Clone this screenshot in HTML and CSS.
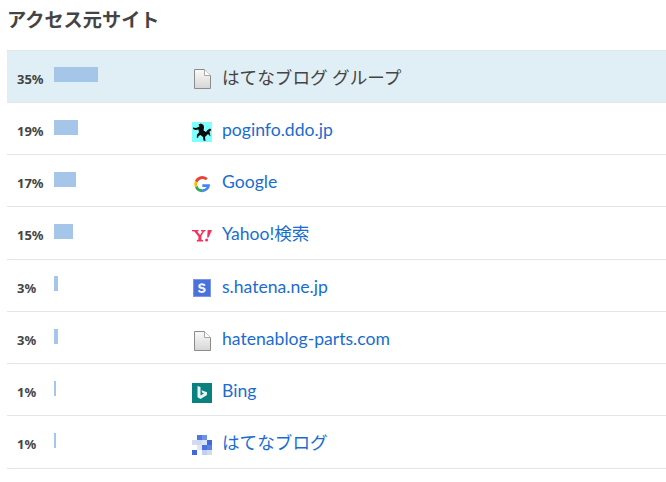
FILE: index.html
```html
<!DOCTYPE html>
<html lang="ja">
<head>
<meta charset="utf-8">
<title>アクセス元サイト</title>
<link rel="stylesheet" href="styles.css">
</head>
<body>
<svg class="defs" width="0" height="0" aria-hidden="true">
  <defs>
    <linearGradient id="paper" x1="0" y1="0" x2="0" y2="1">
      <stop offset="0" stop-color="#fafafa"/>
      <stop offset="1" stop-color="#d6d6d6"/>
    </linearGradient>
    <symbol id="doc" viewBox="0 0 20 20">
      <path d="M2.5 0.5H12.5L18.5 6.5V19.5H2.5Z" fill="url(#paper)" stroke="#8c8c8c"/>
      <path d="M12.5 0.5V6.5H18.5" fill="#fff" stroke="#a8a8a8"/>
    </symbol>
  </defs>
</svg>
<h2 class="title">アクセス元サイト</h2>
<ul class="list">
  <li class="row row-active">
    <span class="pct">35%</span>
    <span class="bar-cell"><span class="bar" style="width:44px"></span></span>
    <svg class="icon"><use href="#doc"/></svg>
    <span class="name">はてなブログ グループ</span>
  </li>
  <li class="row">
    <span class="pct">19%</span>
    <span class="bar-cell"><span class="bar" style="width:24px"></span></span>
    <svg class="icon" viewBox="0 0 20 20">
      <rect width="20" height="20" fill="#7fffff"/>
      <path d="M6.5 2.5L9 1.5L11.5 3L12 5.5L11.5 8.5L14 10L15.5 8L18 6.5L19.5 8L17.5 9.5L18.5 14.5L16 12L14.5 13.5L13 15L13.5 19L11.5 18.5L11 15L8.5 13L6.5 14L6 16L4.8 15.5L5 12.5L7 10.5L6.5 7.5L3.5 8L1 7L1 5.5L4 6L7.5 4.5Z" fill="#0a0a0a"/>
    </svg>
    <a class="name link" href="#">poginfo.ddo.jp</a>
  </li>
  <li class="row">
    <span class="pct">17%</span>
    <span class="bar-cell"><span class="bar" style="width:22px"></span></span>
    <svg class="icon" viewBox="0 0 20 20">
      <path d="M17.6 10.2H10.3V13H14.7A5 5 0 0 1 10.3 15.3L10 18.2A8.2 8.2 0 0 0 18.1 10.9Z" fill="#4285f4"/>
      <path d="M5.4 11.7L3 13.6A8.2 8.2 0 0 0 10.2 18.2L10.2 15.3A5.2 5.2 0 0 1 5.4 11.7Z" fill="#34a853"/>
      <path d="M5.4 8.4L3 6.5A8.2 8.2 0 0 0 3 13.6L5.4 11.7A5.2 5.2 0 0 1 5.4 8.4Z" fill="#fbbc05"/>
      <path d="M5.4 8.4A5.2 5.2 0 0 1 13.7 6.3L15.8 4.2A8.2 8.2 0 0 0 3 6.5Z" fill="#ea4335"/>
    </svg>
    <a class="name link" href="#">Google</a>
  </li>
  <li class="row">
    <span class="pct">15%</span>
    <span class="bar-cell"><span class="bar" style="width:19px"></span></span>
    <svg class="icon" viewBox="0 0 20 20">
      <path d="M0 4H6.5V5.2L5.2 5.4L8 9L10.4 5.4L9 5.2V4H13.5V5.2L12 5.5L9.4 10V13.8L11 14.1V15.4H4.8V14.1L6.4 13.8V10.6L2.4 5.4L0 5.2Z" fill="#f5305f"/>
      <path d="M15.6 4H20L16.6 11.5H15.2Z" fill="#f5305f"/>
      <circle cx="14.6" cy="14" r="1.5" fill="#f5305f"/>
    </svg>
    <a class="name link" href="#">Yahoo!検索</a>
  </li>
  <li class="row">
    <span class="pct">3%</span>
    <span class="bar-cell"><span class="bar" style="width:4px"></span></span>
    <svg class="icon" viewBox="0 0 20 20">
      <rect x="1" y="1" width="18" height="18" fill="#4a72dc"/>
      <rect x="1.5" y="1.5" width="17" height="17" fill="none" stroke="#7b98e6"/>
      <path d="M13.6 7.2C13 5.9 11.4 5.2 9.8 5.3C7.8 5.4 6.3 6.5 6.3 8.2C6.3 10 7.9 10.6 9.8 11C11 11.3 11.7 11.5 11.7 12.1C11.7 12.7 11 13 10 13C8.9 13 8 12.5 7.5 11.7L5.8 13C6.6 14.2 8.2 14.9 10 14.9C12.2 14.9 13.8 13.8 13.8 12C13.8 10.2 12.4 9.5 10.3 9.1C9 8.8 8.4 8.7 8.4 8.1C8.4 7.5 9 7.2 9.9 7.2C10.8 7.2 11.5 7.6 12 8.3Z" fill="#f2f5fd"/>
    </svg>
    <a class="name link" href="#">s.hatena.ne.jp</a>
  </li>
  <li class="row">
    <span class="pct">3%</span>
    <span class="bar-cell"><span class="bar" style="width:4px"></span></span>
    <svg class="icon"><use href="#doc"/></svg>
    <a class="name link" href="#">hatenablog-parts.com</a>
  </li>
  <li class="row">
    <span class="pct">1%</span>
    <span class="bar-cell"><span class="bar" style="width:2px"></span></span>
    <svg class="icon" viewBox="0 0 20 20">
      <rect width="20" height="20" fill="#0a8080"/>
      <path d="M5.5 3L8.5 4V12.5L12 10.5L10.3 9.7L9.4 7.3L15 9.3V12L8.5 16L5.5 14.3Z" fill="#e8f5f5"/>
    </svg>
    <a class="name link" href="#">Bing</a>
  </li>
  <li class="row">
    <span class="pct">1%</span>
    <span class="bar-cell"><span class="bar" style="width:2px"></span></span>
    <svg class="icon" viewBox="0 0 20 20" shape-rendering="crispEdges">
      <rect x="0" y="5" width="5" height="5" fill="#d3dbf1"/>
      <rect x="5" y="0" width="5" height="5" fill="#4f78de"/>
      <rect x="10" y="0" width="5" height="5" fill="#6f92e6"/>
      <rect x="5" y="5" width="5" height="5" fill="#cfd9f2"/>
      <rect x="10" y="5" width="5" height="5" fill="#dbe2f5"/>
      <rect x="15" y="5" width="5" height="5" fill="#3f68d8"/>
      <rect x="5" y="10" width="5" height="5" fill="#e0e6f6"/>
      <rect x="10" y="10" width="5" height="5" fill="#4a72dc"/>
      <rect x="15" y="10" width="5" height="5" fill="#5b82e0"/>
      <rect x="0" y="15" width="5" height="5" fill="#3f68d8"/>
      <rect x="10" y="15" width="5" height="5" fill="#c3cff0"/>
      <rect x="15" y="15" width="5" height="5" fill="#d3dbf1"/>
    </svg>
    <a class="name link" href="#">はてなブログ</a>
  </li>
</ul>
</body>
</html>
```
FILE: styles.css
```css
html, body {
  margin: 0;
  padding: 0;
  background: #fff;
}
body {
  padding: 8px 0 0 7px;
  font-family: "Noto Sans", "Noto Sans CJK JP", sans-serif;
  color: #444;
  overflow: hidden;
}
.defs {
  position: absolute;
}
.title {
  margin: 0;
  height: 41.5px;
  font-size: 19.2px;
  line-height: 24px;
  font-weight: 700;
  color: #444;
}
.list {
  list-style: none;
  margin: 0;
  padding: 0;
  border-top: 1px solid #e3e6e8;
}
.row {
  display: grid;
  grid-template-columns: 10px 37px 138px 30px 1fr;
  grid-template-areas: ". pct bar icon name";
  align-items: center;
  height: 51.25px;
  border-bottom: 1px solid #e3e6e8;
}
.row-active {
  background: #e0eef5;
}
.pct {
  grid-area: pct;
  font-size: 13px;
  font-weight: 700;
  line-height: 16px;
  padding-top: 5px;
  color: #444;
}
.bar-cell {
  grid-area: bar;
  display: flex;
  margin-top: -2.5px;
}
.bar {
  display: block;
  height: 15px;
  background: #a5c6e8;
}
.icon {
  grid-area: icon;
  width: 20px;
  height: 20px;
  margin-top: 6.4px;
}
.name {
  grid-area: name;
  font-family: "Lato", "Noto Sans CJK JP", sans-serif;
  font-size: 17.6px;
  line-height: 24px;
  padding-top: 3px;
  color: #444;
  white-space: nowrap;
}
.link {
  color: #1a6dd0;
  text-decoration: none;
}
```
